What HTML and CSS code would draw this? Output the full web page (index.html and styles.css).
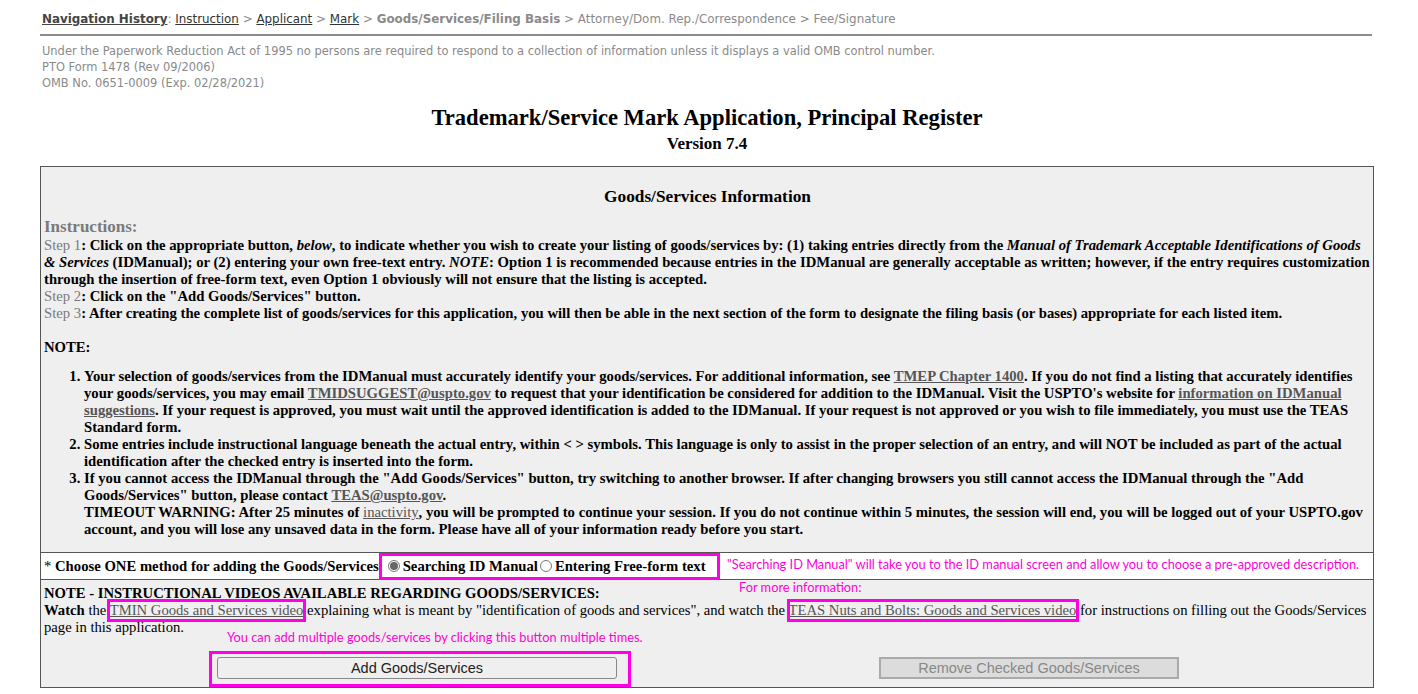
FILE: index.html
```html
<!DOCTYPE html>
<html lang="en">
<head>
<meta charset="utf-8">
<title>Trademark/Service Mark Application, Principal Register</title>
<link rel="stylesheet" href="styles.css">
</head>
<body>
<div class="page">
  <div class="nav">
    <a class="nav-title" href="#">Navigation History</a>: <a class="nav-link" href="#">Instruction</a> &gt; <a class="nav-link" href="#">Applicant</a> &gt; <a class="nav-link" href="#">Mark</a> &gt; <span class="nav-current">Goods/Services/Filing Basis</span> &gt; Attorney/Dom. Rep./Correspondence &gt; Fee/Signature
  </div>
  <div class="rule"></div>
  <div class="omb">
    <div>Under the Paperwork Reduction Act of 1995 no persons are required to respond to a collection of information unless it displays a valid OMB control number.</div>
    <div>PTO Form 1478 (Rev 09/2006)</div>
    <div>OMB No. 0651-0009 (Exp. 02/28/2021)</div>
  </div>
  <h1 class="title">Trademark/Service Mark Application, Principal Register</h1>
  <div class="version">Version 7.4</div>

  <div class="box">
    <div class="intro">
      <h2 class="box-title">Goods/Services Information</h2>
      <div class="instr-head">Instructions:</div>
      <div class="steps">
        <div><span class="step-label">Step 1</span>: Click on the appropriate button, <i>below</i>, to indicate whether you wish to create your listing of goods/services by: (1) taking entries directly from the <i>Manual of Trademark Acceptable Identifications of Goods &amp; Services</i> (IDManual); or (2) entering your own free-text entry. <i>NOTE</i>: Option 1 is recommended because entries in the IDManual are generally acceptable as written; however, if the entry requires customization through the insertion of free-form text, even Option 1 obviously will not ensure that the listing is accepted.</div>
        <div><span class="step-label">Step 2</span>: Click on the "Add Goods/Services" button.</div>
        <div><span class="step-label">Step 3</span>: After creating the complete list of goods/services for this application, you will then be able in the next section of the form to designate the filing basis (or bases) appropriate for each listed item.</div>
      </div>
      <div class="note-label">NOTE:</div>
      <ol class="notes">
        <li>Your selection of goods/services from the IDManual must accurately identify your goods/services. For additional information, see <a href="#">TMEP Chapter 1400</a>. If you do not find a listing that accurately identifies your goods/services, you may email <a href="#">TMIDSUGGEST@uspto.gov</a> to request that your identification be considered for addition to the IDManual. Visit the USPTO's website for <a href="#">information on IDManual suggestions</a>. If your request is approved, you must wait until the approved identification is added to the IDManual. If your request is not approved or you wish to file immediately, you must use the TEAS Standard form.</li>
        <li>Some entries include instructional language beneath the actual entry, within &lt; &gt; symbols. This language is only to assist in the proper selection of an entry, and will NOT be included as part of the actual identification after the checked entry is inserted into the form.</li>
        <li>If you cannot access the IDManual through the "Add Goods/Services" button, try switching to another browser. If after changing browsers you still cannot access the IDManual through the "Add Goods/Services" button, please contact <a href="#">TEAS@uspto.gov</a>.<br>TIMEOUT WARNING: After 25 minutes of <a class="light" href="#">inactivity</a>, you will be prompted to continue your session. If you do not continue within 5 minutes, the session will end, you will be logged out of your USPTO.gov account, and you will lose any unsaved data in the form. Please have all of your information ready before you start.</li>
      </ol>
    </div>

    <div class="choose-row">
      <span class="choose-label"><span class="req">*</span> Choose ONE method for adding the Goods/Services</span>
      <span class="radios">
        <label class="radio-opt"><span class="radio checked"></span>Searching ID Manual</label>
        <label class="radio-opt"><span class="radio"></span>Entering Free-form text</label>
      </span>
    </div>

    <div class="videos">
      <div class="videos-head">NOTE - INSTRUCTIONAL VIDEOS AVAILABLE REGARDING GOODS/SERVICES:</div>
      <div class="videos-text"><b>Watch</b> the <a href="#">TMIN Goods and Services video</a> explaining what is meant by "identification of goods and services", and watch the <a href="#">TEAS Nuts and Bolts: Goods and Services video</a> for instructions on filling out the Goods/Services page in this application.</div>
      <div class="buttons">
        <button class="btn" type="button">Add Goods/Services</button>
        <button class="btn btn-remove" type="button" disabled>Remove Checked Goods/Services</button>
      </div>
    </div>

    <div class="annot-box ab-radios"></div>
    <div class="annot-box ab-tmin"></div>
    <div class="annot-box ab-teas"></div>
    <div class="annot-box ab-add"></div>
    <div class="annot-text at-radios">"Searching ID Manual" will take you to the ID manual screen and allow you to choose a pre-approved description.</div>
    <div class="annot-text at-more">For more information:</div>
    <div class="annot-text at-add">You can add multiple goods/services by clicking this button multiple times.</div>
  </div>
</div>
</body>
</html>
```

FILE: styles.css
```css
html, body {
  margin: 0;
  padding: 0;
  background: #ffffff;
}

.page {
  width: 1334px;
  margin-left: 40px;
  padding-top: 10px;
}

.nav {
  font-family: "DejaVu Sans", Verdana, sans-serif;
  font-size: 11.9px;
  color: #8a8a8a;
  padding-left: 2px;
  line-height: 18px;
}

.nav-title {
  color: #444;
  font-weight: bold;
  text-decoration: underline;
}

.nav-link {
  color: #333;
  text-decoration: underline;
}

.nav-current {
  font-weight: bold;
  color: #8a8a8a;
}

.rule {
  height: 2px;
  background: #8c8c8c;
  margin-top: 6px;
  width: 1332px;
}

.omb {
  font-family: "DejaVu Sans", Verdana, sans-serif;
  font-size: 11.45px;
  color: #8a8a8a;
  padding-left: 2px;
  margin-top: 7px;
  line-height: 16px;
}

.title {
  font-family: "Liberation Serif", "Times New Roman", serif;
  font-size: 22.6px;
  font-weight: bold;
  text-align: center;
  margin: 14px 0 0 0;
  line-height: 26px;
  color: #000;
}

.version {
  font-family: "Liberation Serif", "Times New Roman", serif;
  font-size: 17px;
  font-weight: bold;
  text-align: center;
  line-height: 26px;
  color: #000;
}

.box {
  position: relative;
  margin-top: 9px;
  border: 1px solid #555;
  background: #efefef;
  font-family: "Liberation Serif", "Times New Roman", serif;
  color: #000;
}

.intro {
  padding: 18px 2px 14px 3px;
  font-size: 14.7px;
  font-weight: bold;
  line-height: 17px;
}

.box-title {
  font-size: 17.3px;
  text-align: center;
  margin: 0;
  line-height: 24px;
}

.instr-head {
  color: #7a7a7a;
  font-size: 17px;
  margin-top: 8px;
  line-height: 20px;
}

.step-label {
  color: #7a7a7a;
  font-weight: normal;
}

.note-label {
  margin-top: 17px;
  line-height: 16px;
}

.notes {
  margin: 13px 0 0 0;
  padding-left: 40px;
  padding-right: 4px;
}

.box a {
  color: #555;
  text-decoration: underline;
  font-weight: inherit;
}

.box a.light {
  font-weight: normal;
}

.choose-row {
  background: #fff;
  border-top: 1px solid #555;
  border-bottom: 1px solid #555;
  height: 26px;
  display: flex;
  align-items: center;
  padding-left: 3px;
  font-size: 14.7px;
  font-weight: bold;
}

.req {
  font-weight: normal;
}

.radios {
  display: inline-flex;
  align-items: center;
  margin-left: 7px;
}

.radio-opt {
  display: inline-flex;
  align-items: center;
}

.radio {
  width: 12px;
  height: 12px;
  border: 1px solid #777;
  border-radius: 50%;
  background: #fff;
  margin: 0 3px 0 2px;
  box-sizing: border-box;
  display: inline-flex;
  align-items: center;
  justify-content: center;
}

.radio.checked::after {
  content: "";
  width: 8px;
  height: 8px;
  border-radius: 50%;
  background: #666;
}

.videos {
  padding: 5px 5px 8px 3px;
  font-size: 14.66px;
  line-height: 17px;
}

.videos-head {
  font-weight: bold;
}

.buttons {
  display: flex;
  gap: 262px;
  padding-left: 173px;
  margin-top: 21px;
}

.btn {
  font-family: "Liberation Sans", Arial, sans-serif;
  font-size: 14.5px;
  height: 22px;
  padding: 0;
  border: 1px solid #888;
  border-radius: 3px;
  background: #efefef;
  color: #222;
  width: 400px;
}

.btn-remove {
  width: 300px;
  border: 2px solid #aaa;
  border-radius: 0;
  background: #dcdcdc;
  color: #888;
}

.annot-box {
  position: absolute;
  border: 3px solid #ff00e6;
  box-sizing: border-box;
}

.ab-radios { left: 338px; top: 386px; width: 341px; height: 27px; }
.ab-tmin { left: 66px; top: 432px; width: 199px; height: 23px; }
.ab-teas { left: 746px; top: 432px; width: 292px; height: 23px; }
.ab-add { left: 168px; top: 484px; width: 422px; height: 36px; }

.annot-text {
  position: absolute;
  font-family: "Lato", "Open Sans", sans-serif;
  font-size: 12.8px;
  color: #ff00d8;
  white-space: nowrap;
  line-height: 14px;
}

.at-radios { left: 686px; top: 390px; }
.at-more { left: 698px; top: 413px; }
.at-add { left: 186px; top: 463px; }
```
